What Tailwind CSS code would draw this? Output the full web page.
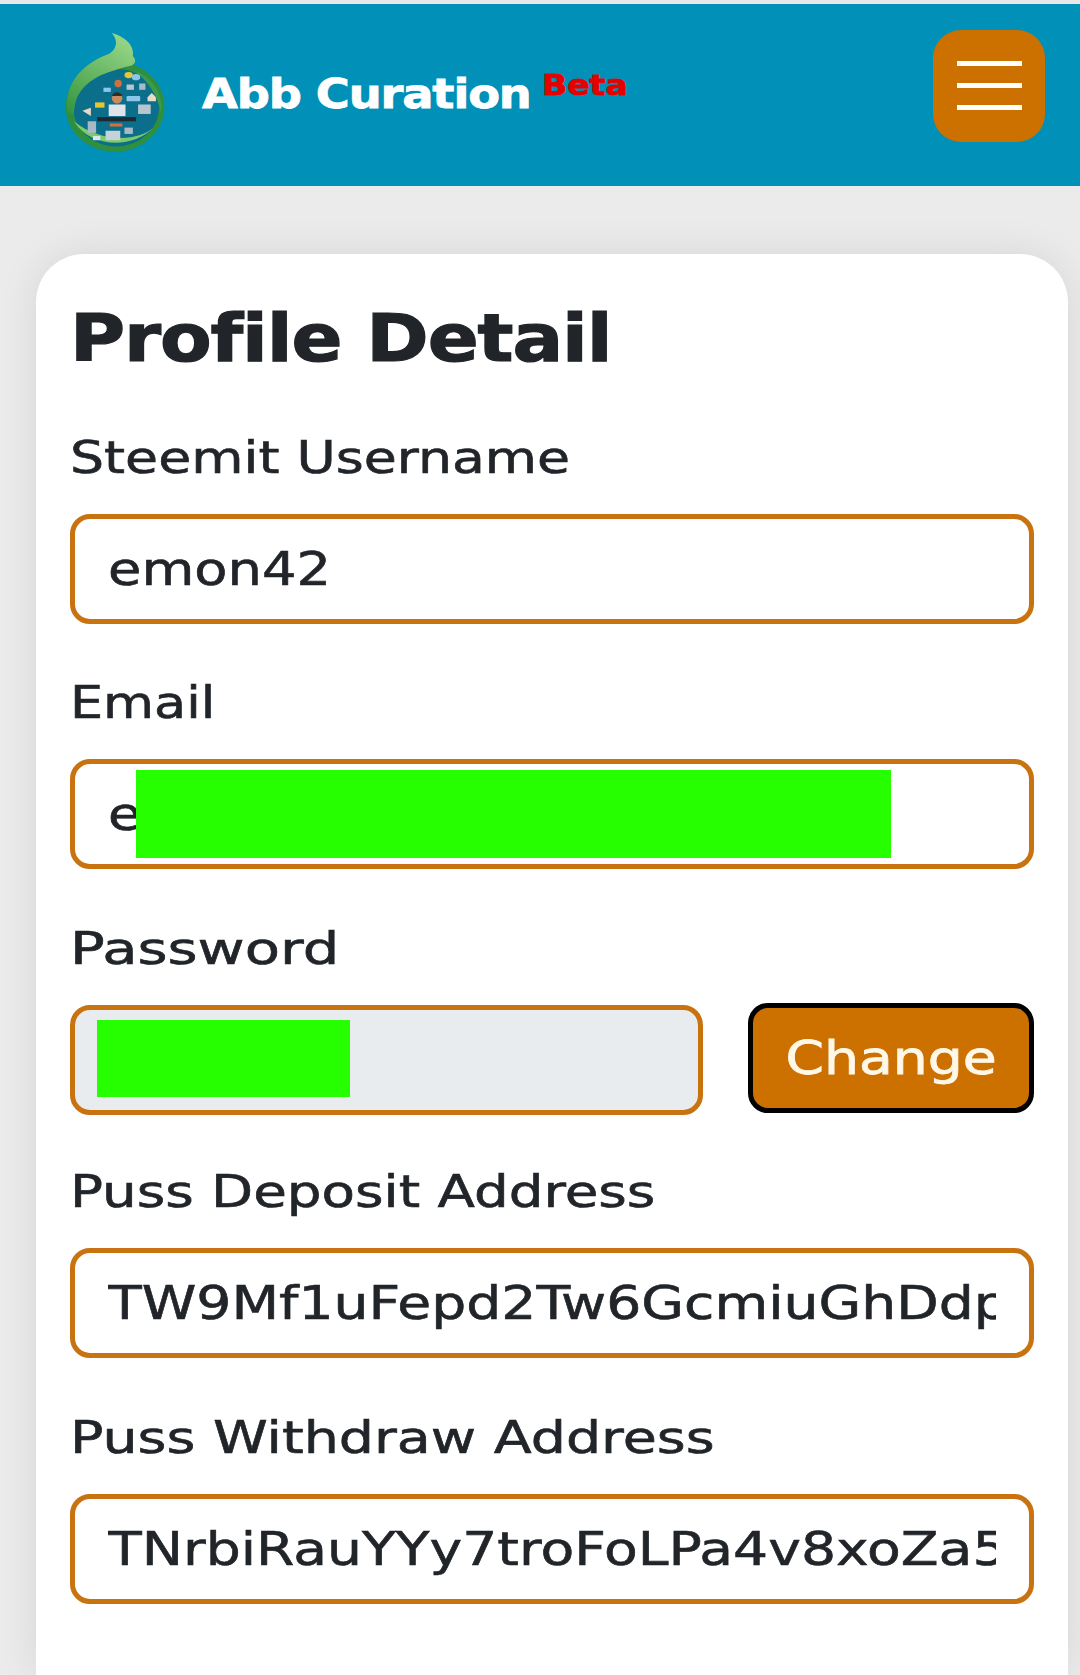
<!DOCTYPE html>
<html lang="en">
<head>
  <meta charset="UTF-8">
  <title>Abb Curation - Profile Detail</title>
  <script src="https://cdn.jsdelivr.net/npm/@tailwindcss/browser@4"></script>
</head>
<body class="bg-[#ebebeb] font-['DejaVu_Sans',sans-serif] text-[#212529] h-[1675px] overflow-hidden">
  <div class="h-[4px] bg-[#e8e8e8]"></div>
  <header class="h-[182px] bg-[#0090b8] flex items-center pl-[61px] pr-[35px]">
    <!-- logo -->
    <svg class="w-[108px] h-[126px] shrink-0 -mt-[2px]" viewBox="0 0 102 120">
      <defs>
        <linearGradient id="leaf" x1="0.6" y1="0" x2="0.1" y2="1">
          <stop offset="0" stop-color="#93d383"/>
          <stop offset="1" stop-color="#35963f"/>
        </linearGradient>
      </defs>
      <ellipse cx="51" cy="72" rx="47" ry="43" fill="#2f8f3e"/>
      <ellipse cx="52" cy="73" rx="41" ry="37" fill="#0b6f8b"/>
      <path d="M5 72C5 50 18 32 45 22C52 18 55 10 48 2C60 5 70 14 68 24C72 28 70 32 66 33C58 35 50 37 38 42C22 50 12 60 12 80C7 78 5 76 5 72Z" fill="url(#leaf)"/>
      <path d="M12 86C26 110 66 114 88 92C72 106 36 106 12 86Z" fill="#7ccb6a"/>
      <path d="M68 37C86 44 97 58 95 78C91 60 82 47 68 37Z" fill="#3c9b48"/>
      <circle cx="54" cy="50" r="3.5" fill="#d0703a"/>
      <circle cx="53" cy="64" r="5" fill="#c98b5e"/>
      <path d="M48 62C49 57 57 57 58 62Z" fill="#3a2a20"/>
      <rect x="45" y="70" width="16" height="11" fill="#dfe4ea"/>
      <rect x="34" y="82" width="37" height="4" fill="#1f2933"/>
      <rect x="32" y="68" width="9" height="5" fill="#e5c732"/>
      <rect x="62" y="62" width="13" height="5" rx="1" fill="#8cc6e8"/>
      <rect x="73" y="70" width="12" height="9" fill="#b9c6d0"/>
      <path d="M82 63L86 59L90 63V67H82Z" fill="#e8dcc8"/>
      <path d="M20 76L28 73V81Z" fill="#e7d9c8"/>
      <rect x="25" y="86" width="8" height="11" fill="#a9bac6"/>
      <rect x="42" y="95" width="14" height="9" fill="#c6d2da"/>
      <rect x="60" y="92" width="8" height="6" fill="#a9bac6"/>
      <rect x="46" y="88" width="12" height="3" fill="#d0703a"/>
      <rect x="30" y="100" width="7" height="4" fill="#dfe4ea"/>
      <ellipse cx="64" cy="42" rx="4" ry="3" fill="#e5c732"/>
      <ellipse cx="71" cy="44" rx="4" ry="3" fill="#8cc6e8"/>
      <rect x="62" y="51" width="7" height="5" fill="#b9c6d0"/>
      <rect x="74" y="50" width="6" height="6" fill="#a9bac6"/>
      <rect x="40" y="54" width="7" height="4" fill="#8cc6e8"/>
    </svg>
    <div class="ml-[33px] -mt-[2px] flex items-start text-white font-bold text-[41px] leading-none [-webkit-text-stroke:0.8px_white]">
      <span class="origin-left scale-x-[1.13] tracking-[-1px]">Abb Curation</span>
      <span class="ml-[49px] -mt-[2px] text-[28px] text-[#e60000] origin-left scale-x-[1.18] [-webkit-text-stroke:0.8px_#e60000]">Beta</span>
    </div>
    <button class="ml-auto mb-[19px] w-[112px] h-[112px] rounded-[28px] bg-[#cc7000] flex flex-col items-center justify-center gap-[17px]">
      <span class="block w-[65px] h-[5px] bg-white"></span>
      <span class="block w-[65px] h-[5px] bg-white"></span>
      <span class="block w-[65px] h-[5px] bg-white"></span>
    </button>
  </header>

  <main class="ml-[36px] mt-[68px] w-[1032px] h-[1421px] bg-white rounded-t-[48px] shadow-[0_0_40px_rgba(0,0,0,0.09)] px-[34px] pt-[46px]">
    <h1 class="text-[66px] leading-[78px] font-bold tracking-[-1px] origin-left scale-x-[1.14] [-webkit-text-stroke:1.2px_#212529]">Profile Detail</h1>

    <label class="block mt-[50px] text-[44px] leading-[60px] origin-left scale-x-[1.22] [-webkit-text-stroke:0.6px_#212529]">Steemit Username</label>
    <div class="mt-[26px] h-[110px] px-[33px] border-[5px] border-[#c8730f] rounded-[20px] bg-white flex items-center">
      <div class="w-full overflow-hidden text-[46px] leading-[60px] whitespace-nowrap [-webkit-text-stroke:0.6px_#212529]"><div class="origin-left scale-x-[1.18]">emon42</div></div>
    </div>

    <label class="block mt-[49px] text-[44px] leading-[60px] origin-left scale-x-[1.19] [-webkit-text-stroke:0.6px_#212529]">Email</label>
    <div class="relative mt-[26px] h-[110px] px-[33px] border-[5px] border-[#c8730f] rounded-[20px] bg-white flex items-center">
      <div class="w-full overflow-hidden text-[46px] leading-[60px] whitespace-nowrap [-webkit-text-stroke:0.6px_#212529]"><div class="origin-left scale-x-[1.18]">e</div></div>
      <div class="absolute left-[61px] top-[6px] w-[755px] h-[88px] bg-[#26ff00]"></div>
    </div>

    <label class="block mt-[50px] text-[44px] leading-[60px] origin-left scale-x-[1.31] [-webkit-text-stroke:0.6px_#212529]">Password</label>
    <div class="mt-[26px] flex items-center justify-between">
      <div class="relative w-[633px] h-[110px] border-[5px] border-[#c8730f] rounded-[20px] bg-[#e9ecef]">
        <div class="absolute left-[22px] top-[10px] w-[253px] h-[77px] bg-[#26ff00]"></div>
      </div>
      <button class="w-[286px] h-[110px] -mt-[4px] rounded-[20px] border-[5px] border-black bg-[#cc7000] text-[#fff8e8] text-[46px] [-webkit-text-stroke:0.8px_#fff8e8]"><span class="inline-block scale-x-[1.2]">Change</span></button>
    </div>

    <label class="block mt-[47px] text-[44px] leading-[60px] origin-left scale-x-[1.243] [-webkit-text-stroke:0.6px_#212529]">Puss Deposit Address</label>
    <div class="mt-[26px] h-[110px] px-[33px] border-[5px] border-[#c8730f] rounded-[20px] bg-white flex items-center">
      <div class="w-full overflow-hidden text-[46px] leading-[60px] whitespace-nowrap [-webkit-text-stroke:0.6px_#212529]"><div class="origin-left scale-x-[1.2]">TW9Mf1uFepd2Tw6GcmiuGhDdp</div></div>
    </div>

    <label class="block mt-[50px] text-[44px] leading-[60px] origin-left scale-x-[1.26] [-webkit-text-stroke:0.6px_#212529]">Puss Withdraw Address</label>
    <div class="mt-[26px] h-[110px] px-[33px] border-[5px] border-[#c8730f] rounded-[20px] bg-white flex items-center">
      <div class="w-full overflow-hidden text-[46px] leading-[60px] whitespace-nowrap [-webkit-text-stroke:0.6px_#212529]"><div class="origin-left scale-x-[1.2]">TNrbiRauYYy7troFoLPa4v8xoZa5</div></div>
    </div>
  </main>
</body>
</html>
